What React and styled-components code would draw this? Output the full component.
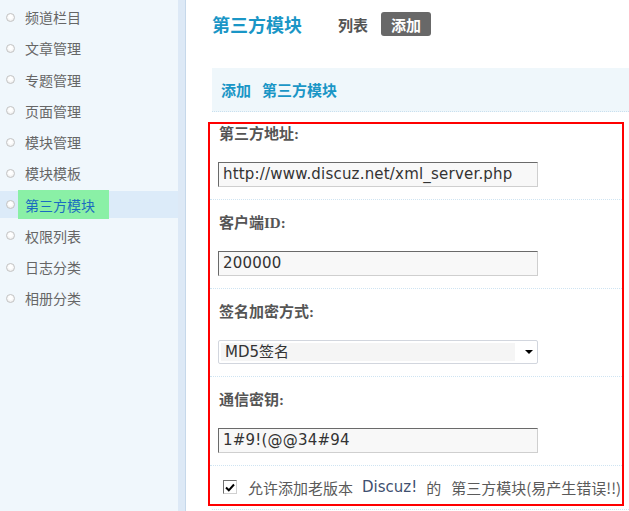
import React from 'react';
import styled, { createGlobalStyle } from 'styled-components';

const Global = createGlobalStyle`
  html, body { margin: 0; padding: 0; background: #fff; }
  body { font-family: "Noto Sans CJK SC", "DejaVu Sans", sans-serif; }
`;

const Page = styled.div`
  display: flex;
  width: 629px;
  height: 511px;
  overflow: hidden;
`;

const Sidebar = styled.ul`
  list-style: none;
  margin: 0;
  padding: 1.5px 0 0;
  width: 178px;
  flex: none;
  background: #f0f7fc;
  border-right: 7px solid #dde9f6;
  box-shadow: 1px 0 0 #c6d8ea;
`;

const Item = styled.li`
  display: flex;
  align-items: center;
  height: 31.25px;
  font-size: 14px;
  color: ${p => (p.$active ? '#1a6cc0' : '#666')};
  background: ${p =>
    p.$active
      ? 'linear-gradient(to bottom, transparent 1.5px, #dcebf9 1.5px, #dcebf9 28.5px, transparent 28.5px)'
      : 'none'};
`;

const Bullet = styled.span`
  width: 7px;
  height: 7px;
  margin: 0 10px 0 6px;
  border-radius: 50%;
  border: 1px solid #c4c4c4;
  background: radial-gradient(circle at 50% 40%, #fff 30%, #e4e4e4 100%);
  flex: none;
`;

const ItemText = styled.span`
  display: flex;
  align-items: center;
  height: 29px;
  margin-left: ${p => (p.$active ? '-7px' : '0')};
  padding: ${p => (p.$active ? '0 14px 0 7px' : '0')};
  background: ${p => (p.$active ? '#8af0a6' : 'none')};
`;

const Main = styled.div`
  flex: 1;
  min-width: 0;
  margin-left: 1px;
`;

const Header = styled.div`
  display: flex;
  align-items: center;
  height: 48px;
  padding-left: 26px;
`;

const Title = styled.h2`
  margin: 0 36px 0 0;
  font-size: 18px;
  font-weight: bold;
  color: #1a96c6;
`;

const Tab = styled.span`
  display: flex;
  align-items: center;
  height: 24px;
  margin-right: 13px;
  padding: ${p => (p.$current ? '0 10px' : '0')};
  border-radius: 3px;
  font-size: 15px;
  font-weight: bold;
  color: ${p => (p.$current ? '#fff' : '#555')};
  background: ${p => (p.$current ? '#686868' : 'none')};
`;

const Table = styled.div`
  margin: 20px 0 0 26px;
`;

const PanelHead = styled.div`
  display: flex;
  align-items: center;
  gap: 11px;
  height: 43px;
  padding-left: 9px;
  background: #eff7fb;
  border-bottom: 1px dotted #c9e0ef;
  font-size: 15px;
  font-weight: bold;
  color: #1a96c6;
`;

const Annotation = styled.div`
  margin: 10px 5px 0 -4px;
  border: 2px solid #f00;
`;

const Row = styled.div`
  padding: ${p => (p.$first ? '0' : '13px')} 0 12px 9px;
  border-bottom: 1px dotted #cfe4f2;
`;

const Label = styled.div`
  height: 20px;
  line-height: 20px;
  margin-bottom: 18px;
  font-family: "Liberation Serif", "Noto Sans CJK SC", serif;
  font-size: 15px;
  font-weight: bold;
  color: #555;
`;

const TextBox = styled.div`
  box-sizing: border-box;
  width: 320px;
  height: 25px;
  margin-left: -1px;
  padding-left: 4px;
  line-height: 23px;
  border: 1px solid;
  border-color: #6a6a6a #cfcfcf #cfcfcf #6a6a6a;
  background: #f8f8f8;
  font-family: "DejaVu Sans", "Noto Sans CJK SC", sans-serif;
  font-size: 15px;
  letter-spacing: 0.2px;
  color: #333;
  white-space: nowrap;
`;

const Select = styled.div`
  box-sizing: border-box;
  display: flex;
  align-items: center;
  width: 320px;
  height: 24px;
  margin-left: -1px;
  padding: 2px;
  border: 1px solid #d2d6de;
  border-radius: 2px;
  background: #fff;
`;

const SelectValue = styled.span`
  flex: none;
  width: 290px;
  height: 100%;
  padding-left: 4px;
  line-height: 18px;
  background: #f5f5f5;
  font-family: "DejaVu Sans", "Noto Sans CJK SC", sans-serif;
  font-size: 15px;
  color: #333;
`;

const Arrow = styled.span`
  margin-left: 10px;
  width: 0;
  height: 0;
  border-left: 4px solid transparent;
  border-right: 4px solid transparent;
  border-top: 4px solid #000;
`;

const CheckRow = styled.div`
  display: flex;
  align-items: center;
  height: 34px;
  padding: 4px 0 0 13px;
  font-size: 15px;
  color: #5a5a5a;
  white-space: nowrap;
`;

const CheckBox = styled.span`
  box-sizing: border-box;
  display: flex;
  align-items: center;
  justify-content: center;
  width: 14px;
  height: 14px;
  margin-right: 11px;
  border: 1px solid;
  border-color: #707070 #d0d0d0 #d0d0d0 #707070;
  background: #fff;
`;

const Latin = styled.span`
  margin: 0 9px;
  font-family: "DejaVu Sans", sans-serif;
  color: #3f5070;
`;

const Gap = styled.span`
  width: 10px;
  flex: none;
`;

const Dotted = styled.div`
  margin: 3px 0 0;
  border-bottom: 1px dotted #cfe4f2;
`;

const menu = ['频道栏目', '文章管理', '专题管理', '页面管理', '模块管理', '模块模板', '第三方模块', '权限列表', '日志分类', '相册分类'];

const fields = [
  { label: '第三方地址:', value: 'http://www.discuz.net/xml_server.php' },
  { label: '客户端ID:', value: '200000' },
  { label: '签名加密方式:', value: 'MD5签名', select: true },
  { label: '通信密钥:', value: '1#9!(@@34#94' },
];

export default function App() {
  return (
    <Page>
      <Global />
      <Sidebar>
        {menu.map(m => (
          <Item key={m} $active={m === '第三方模块'}>
            <Bullet />
            <ItemText $active={m === '第三方模块'}>{m}</ItemText>
          </Item>
        ))}
      </Sidebar>
      <Main>
        <Header>
          <Title>第三方模块</Title>
          <Tab>列表</Tab>
          <Tab $current>添加</Tab>
        </Header>
        <Table>
          <PanelHead>
            <span>添加</span>
            <span>第三方模块</span>
          </PanelHead>
          <Annotation>
            {fields.map((f, i) => (
              <Row key={f.label} $first={i === 0}>
                <Label>{f.label}</Label>
                {f.select ? (
                  <Select>
                    <SelectValue>{f.value}</SelectValue>
                    <Arrow />
                  </Select>
                ) : (
                  <TextBox>{f.value}</TextBox>
                )}
              </Row>
            ))}
            <CheckRow>
              <CheckBox>
                <svg width="10" height="9" viewBox="0 0 10 9">
                  <path d="M1 4.5 L3.8 7.3 L9 1.5" fill="none" stroke="#000" strokeWidth="2" />
                </svg>
              </CheckBox>
              允许添加老版本<Latin>Discuz!</Latin>的<Gap />第三方模块(易产生错误!!)
            </CheckRow>
          </Annotation>
          <Dotted />
        </Table>
      </Main>
    </Page>
  );
}
